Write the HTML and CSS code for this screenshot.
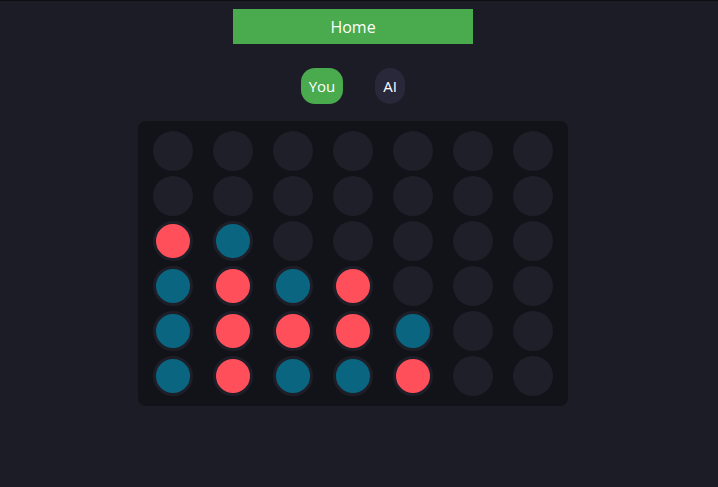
FILE: index.html
```html
<!DOCTYPE html>
<html>
<head>
<meta charset="utf-8">
<link rel="stylesheet" href="styles.css">
</head>
<body>
<div class="page">
  <button class="home">Home</button>
  <div class="players">
    <span class="pill pill-you">You</span>
    <span class="pill pill-ai">AI</span>
  </div>
  <div class="board">
    <div class="cell"></div><div class="cell"></div><div class="cell"></div><div class="cell"></div><div class="cell"></div><div class="cell"></div><div class="cell"></div>
    <div class="cell"></div><div class="cell"></div><div class="cell"></div><div class="cell"></div><div class="cell"></div><div class="cell"></div><div class="cell"></div>
    <div class="cell red"></div><div class="cell blue"></div><div class="cell"></div><div class="cell"></div><div class="cell"></div><div class="cell"></div><div class="cell"></div>
    <div class="cell blue"></div><div class="cell red"></div><div class="cell blue"></div><div class="cell red"></div><div class="cell"></div><div class="cell"></div><div class="cell"></div>
    <div class="cell blue"></div><div class="cell red"></div><div class="cell red"></div><div class="cell red"></div><div class="cell blue"></div><div class="cell"></div><div class="cell"></div>
    <div class="cell blue"></div><div class="cell red"></div><div class="cell blue"></div><div class="cell blue"></div><div class="cell red"></div><div class="cell"></div><div class="cell"></div>
  </div>
</div>
</body>
</html>
```
FILE: styles.css
```css
html, body {
  margin: 0;
  padding: 0;
  background: #1c1c26;
  height: 100%;
}
body {
  border-top: 1px solid #0e0e12;
  box-sizing: border-box;
  font-family: "Open Sans", "Noto Sans", sans-serif;
  color: #ffffff;
}
.page {
  width: 706px;
  display: flex;
  flex-direction: column;
  align-items: center;
  padding-top: 8px;
}
.home {
  width: 240px;
  height: 35px;
  background: #4aaa4e;
  border: none;
  color: #ffffff;
  font-family: "Open Sans", "Noto Sans", sans-serif;
  font-size: 16px;
  padding: 0;
  cursor: pointer;
}
.players {
  display: flex;
  gap: 32px;
  margin-top: 24px;
}
.pill {
  height: 36px;
  box-sizing: border-box;
  display: flex;
  align-items: center;
  justify-content: center;
  font-size: 15px;
  border-radius: 14px;
}
.pill-you {
  width: 42px;
  background: #4aaa4e;
}
.pill-ai {
  width: 30px;
  background: #28283a;
  border-radius: 15px;
}
.board {
  margin-top: 17px;
  background: #121219;
  border-radius: 8px;
  padding: 10px 15px;
  display: grid;
  grid-template-columns: repeat(7, 40px);
  grid-auto-rows: 40px;
  column-gap: 20px;
  row-gap: 5px;
}
.cell {
  width: 40px;
  height: 40px;
  border-radius: 50%;
  background: #1f1f2a;
  box-sizing: border-box;
}
.cell.red {
  background: #ff4f5b;
  border: 3px solid #1e1e29;
}
.cell.blue {
  background: #0a6680;
  border: 3px solid #1e1e29;
}
```
